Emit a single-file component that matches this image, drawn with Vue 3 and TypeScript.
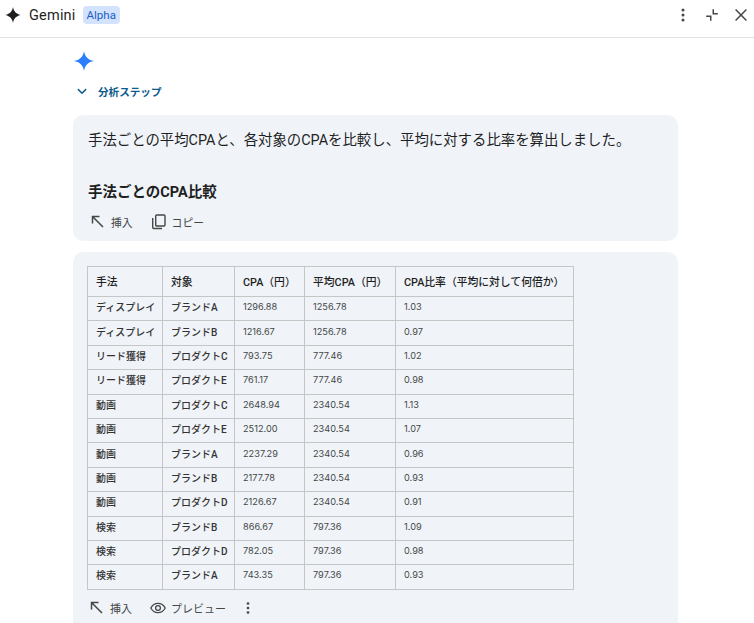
<script setup lang="ts">
const headers = ['手法', '対象', 'CPA(円)', '平均CPA(円)', 'CPA比率(平均に対して何倍か)'].map(h => h.replace('(', '（').replace(')', '）'))
const rows: string[][] = [
  ['ディスプレイ', 'ブランドA', '1296.88', '1256.78', '1.03'],
  ['ディスプレイ', 'ブランドB', '1216.67', '1256.78', '0.97'],
  ['リード獲得', 'プロダクトC', '793.75', '777.46', '1.02'],
  ['リード獲得', 'プロダクトE', '761.17', '777.46', '0.98'],
  ['動画', 'プロダクトC', '2648.94', '2340.54', '1.13'],
  ['動画', 'プロダクトE', '2512.00', '2340.54', '1.07'],
  ['動画', 'ブランドA', '2237.29', '2340.54', '0.96'],
  ['動画', 'ブランドB', '2177.78', '2340.54', '0.93'],
  ['動画', 'プロダクトD', '2126.67', '2340.54', '0.91'],
  ['検索', 'ブランドB', '866.67', '797.36', '1.09'],
  ['検索', 'プロダクトD', '782.05', '797.36', '0.98'],
  ['検索', 'ブランドA', '743.35', '797.36', '0.93'],
]
</script>

<template>
  <div class="page">
    <header class="topbar">
      <svg class="logo" viewBox="0 0 24 24" width="16" height="16"><path d="M12 0c.9 6.600 5.400 11.100 12 12-6.600.9-11.100 5.400-12 12-.9-6.600-5.400-11.100-12-12C6.600 11.100 11.100 6.600 12 0z" fill="#1f1f1f"/></svg>
      <span class="brand">Gemini</span>
      <span class="badge">Alpha</span>
      <div class="spacer"></div>
      <div class="actions">
        <svg viewBox="0 0 24 24" width="20" height="20" fill="#444746"><circle cx="12" cy="6" r="1.800"/><circle cx="12" cy="12" r="1.800"/><circle cx="12" cy="18" r="1.800"/></svg>
        <svg viewBox="0 0 24 24" width="20" height="20" fill="none" stroke="#444746" stroke-width="1.800"><path d="M13.500 5v5.500H19M5 13.500h5.500V19"/></svg>
        <svg viewBox="0 0 24 24" width="20" height="20" fill="none" stroke="#444746" stroke-width="1.800"><path d="M5.500 5.500l13 13M18.500 5.500l-13 13"/></svg>
      </div>
    </header>

    <main class="content">
      <svg class="spark" viewBox="0 0 24 24" width="20" height="20"><path d="M12 0c.9 6.600 5.400 11.100 12 12-6.600.9-11.100 5.400-12 12-.9-6.600-5.400-11.100-12-12C6.600 11.100 11.100 6.600 12 0z" fill="#2b7fff"/></svg>
      <div class="steps">
        <svg viewBox="0 0 24 24" width="18" height="18" fill="none" stroke="#0b5b8c" stroke-width="1.900"><path d="M6.500 9.500l5.500 5.500 5.500-5.500"/></svg>
        <span>分析ステップ</span>
      </div>

      <section class="card first">
        <p class="lead">手法ごとの平均CPAと、各対象のCPAを比較し、平均に対する比率を算出しました。</p>
        <h2 class="heading">手法ごとのCPA比較</h2>
        <div class="tools">
          <span class="tool insert">
            <svg viewBox="0 0 16 16" width="16" height="16" fill="none" stroke="#444746" stroke-width="1.500"><path d="M2.500 9.500v-7h7M3 3l10 10"/></svg>
            <span>挿入</span>
          </span>
          <span class="tool">
            <svg viewBox="0 0 16 16" width="16" height="16" fill="none" stroke="#444746" stroke-width="1.400"><rect x="4.700" y="1" width="9.300" height="11" rx="1"/><path d="M1.700 4v9.500a1 1 0 0 0 1 1h8.300"/></svg>
            <span>コピー</span>
          </span>
        </div>
      </section>

      <section class="card second">
        <table class="grid">
          <colgroup>
            <col class="c1" /><col class="c2" /><col class="c3" /><col class="c4" /><col class="c5" />
          </colgroup>
          <thead>
            <tr><th v-for="h in headers" :key="h">{{ h }}</th></tr>
          </thead>
          <tbody>
            <tr v-for="(r, i) in rows" :key="i">
              <td v-for="(c, j) in r" :key="j" :class="j < 2 ? 'strong' : 'num'">{{ c }}</td>
            </tr>
          </tbody>
        </table>
        <div class="tools lower">
          <span class="tool insert">
            <svg viewBox="0 0 16 16" width="16" height="16" fill="none" stroke="#444746" stroke-width="1.500"><path d="M2.500 9.500v-7h7M3 3l10 10"/></svg>
            <span>挿入</span>
          </span>
          <span class="tool">
            <svg viewBox="0 0 16 16" width="16" height="16" fill="none" stroke="#444746" stroke-width="1.300"><path d="M.8 8C2.500 4.800 5 3.300 8 3.300s5.500 1.500 7.200 4.700c-1.700 3.200-4.200 4.700-7.200 4.700S2.500 11.200.8 8z"/><circle cx="8" cy="8" r="2.400"/></svg>
            <span>プレビュー</span>
          </span>
          <svg class="more" viewBox="0 0 24 24" width="18" height="18" fill="#444746"><circle cx="12" cy="6" r="1.800"/><circle cx="12" cy="12" r="1.800"/><circle cx="12" cy="18" r="1.800"/></svg>
        </div>
      </section>
    </main>
  </div>
</template>

<style>
html, body { margin: 0; background: #fff; overflow: hidden; }
</style>

<style scoped>
.page {
  width: 754px;
  height: 623px;
  overflow: hidden;
  font-family: Roboto, "Noto Sans CJK JP", sans-serif;
  color: #1f1f1f;
}
.topbar {
  display: flex;
  align-items: center;
  padding: 0 3px 7px 5px;
  box-sizing: border-box;
  border-bottom: 1px solid #e3e3e3;
  height: 38px;
}
.logo { flex: none; }
.brand { margin-left: 8px; font-size: 14.500px; letter-spacing: .2px; }
.badge {
  margin-left: 7px;
  background: #d3e3fd;
  color: #1a5cc8;
  font-size: 11.500px;
  line-height: 18px;
  padding: 0 4px;
  border-radius: 4px;
}
.spacer { flex: 1; }
.actions { display: flex; align-items: center; gap: 9px; }
.content { padding: 13px 76px 0 73px; }
.spark { display: block; margin-left: 1px; }
.steps {
  display: flex;
  align-items: center;
  margin-top: 10px;
  height: 20px;
  color: #0b5b8c;
  font-size: 10.600px;
  font-weight: 700;
}
.steps svg { margin-right: 7px; }
.card { background: #f0f4f9; border-radius: 10px; }
.first { margin-top: 14px; height: 126px; padding: 15px 15px 0; box-sizing: border-box; }
.lead { margin: 0; font-size: 14.400px; line-height: 22px; }
.heading { margin: 30px 0 0; font-size: 14.500px; line-height: 22px; font-weight: 700; }
.tools { display: flex; align-items: center; height: 24px; margin-top: 6px; color: #444746; font-size: 10.800px; }
.tool { display: flex; align-items: center; gap: 5px; }
.tools svg { flex: none; }
.insert { margin-right: 18px; margin-left: 2px; }
.second { margin-top: 11px; height: 400px; padding: 14px; box-sizing: border-box; }
.grid {
  border-collapse: collapse;
  table-layout: fixed;
  width: 486px;
  font-size: 10px;
  color: #444746;
}
.c1 { width: 75px; }
.c2 { width: 72px; }
.c3 { width: 70px; }
.c4 { width: 91px; }
.c5 { width: 178px; }
th, td {
  border: 1px solid #c4c7c5;
  padding: 0 8px 4px;
  text-align: left;
  white-space: nowrap;
  overflow: hidden;
}
th { height: 27px; padding-bottom: 2px; font-weight: 500; font-size: 10.800px; color: #1f1f1f; }
td { height: 19.400px; }
td.strong { font-weight: 500; color: #333; }
td.num { font-family: Inter, Roboto, sans-serif; font-size: 9.200px; }
.lower { margin-top: 6px; font-size: 11px; }
.lower .insert { margin-right: 18px; }
.more { margin-left: 13px; }
</style>
